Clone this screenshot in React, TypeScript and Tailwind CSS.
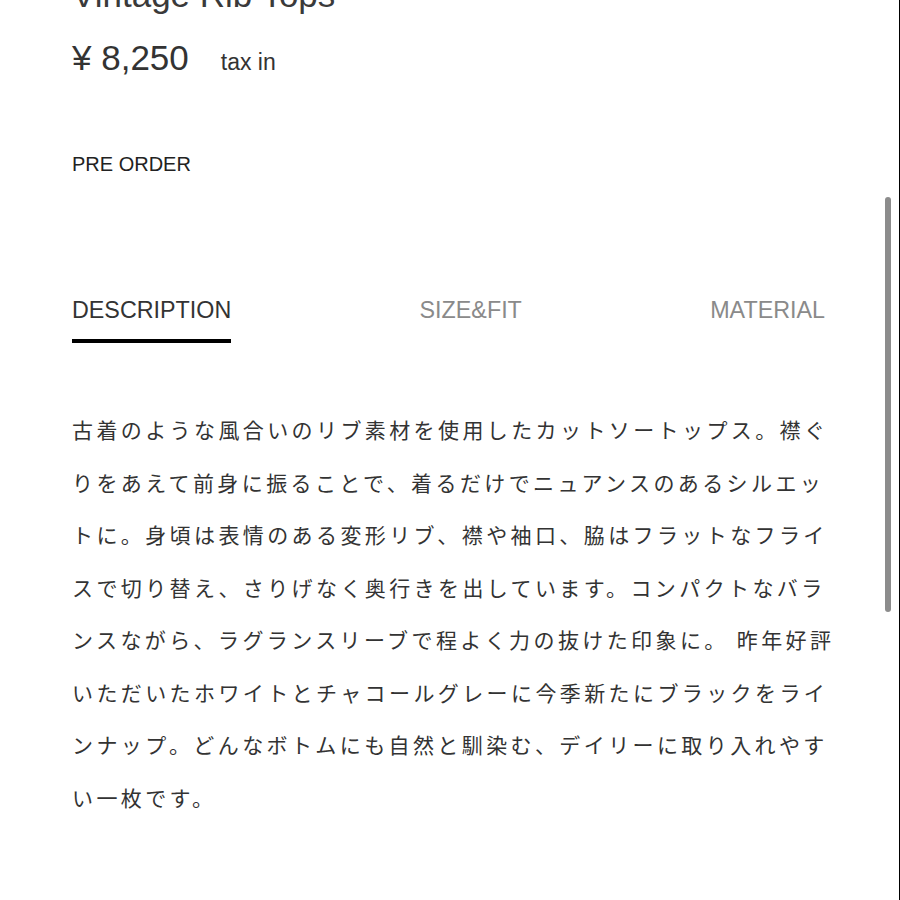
import { useState } from "react";

const tabs = ["DESCRIPTION", "SIZE&FIT", "MATERIAL"];

// 改行位置はスクショに合わせて固定
const description = [
  "古着のような風合いのリブ素材を使用したカットソートップス。襟ぐ",
  "りをあえて前身に振ることで、着るだけでニュアンスのあるシルエッ",
  "トに。身頃は表情のある変形リブ、襟や袖口、脇はフラットなフライ",
  "スで切り替え、さりげなく奥行きを出しています。コンパクトなバラ",
  "ンスながら、ラグランスリーブで程よく力の抜けた印象に。 昨年好評",
  "いただいたホワイトとチャコールグレーに今季新たにブラックをライ",
  "ンナップ。どんなボトムにも自然と馴染む、デイリーに取り入れやす",
  "い一枚です。",
];

export default function App() {
  const [tab, setTab] = useState("DESCRIPTION");

  return (
    <div className="relative h-[900px] w-[900px] overflow-hidden border-r border-black bg-white font-['Liberation_Sans','Noto_Sans_CJK_JP',sans-serif] text-[#333]">
      <div className="pl-[72px] pr-[74px]">
        <h1 className="mt-[-26px] text-[35px] leading-[41px] text-[#3a3a3a]">Vintage Rib Tops</h1>

        <div className="mt-[23px] flex items-baseline gap-[32px]">
          <span className="text-[35px] leading-[40px]">¥ 8,250</span>
          <span className="text-[23px] leading-[26px]">tax in</span>
        </div>

        <p className="mt-[74px] text-[20px] leading-[24px] text-[#222]">PRE ORDER</p>

        <div className="mt-[121px] flex items-start justify-between">
          {tabs.map((t) => (
            <button
              key={t}
              type="button"
              onClick={() => setTab(t)}
              className={
                t === tab
                  ? "border-b-4 border-black pb-[16px] text-[23.3px] leading-[26px] text-[#333]"
                  : "pb-[16px] text-[23.3px] leading-[26px] text-[#8a8a8a]"
              }
            >
              {t}
            </button>
          ))}
        </div>

        <p className="mt-[60px] whitespace-nowrap font-['Noto_Sans_CJK_JP',sans-serif] text-[21px] leading-[52.5px] tracking-[3.4px] text-[#333]">
          {description.map((line, i) => (
            <span key={i} className="block">
              {line}
            </span>
          ))}
        </p>
      </div>

      {/* スクロールバー */}
      <div className="absolute left-[885px] top-[197px] h-[415px] w-[6px] rounded-full bg-[#8c8c8c]" />
    </div>
  );
}
